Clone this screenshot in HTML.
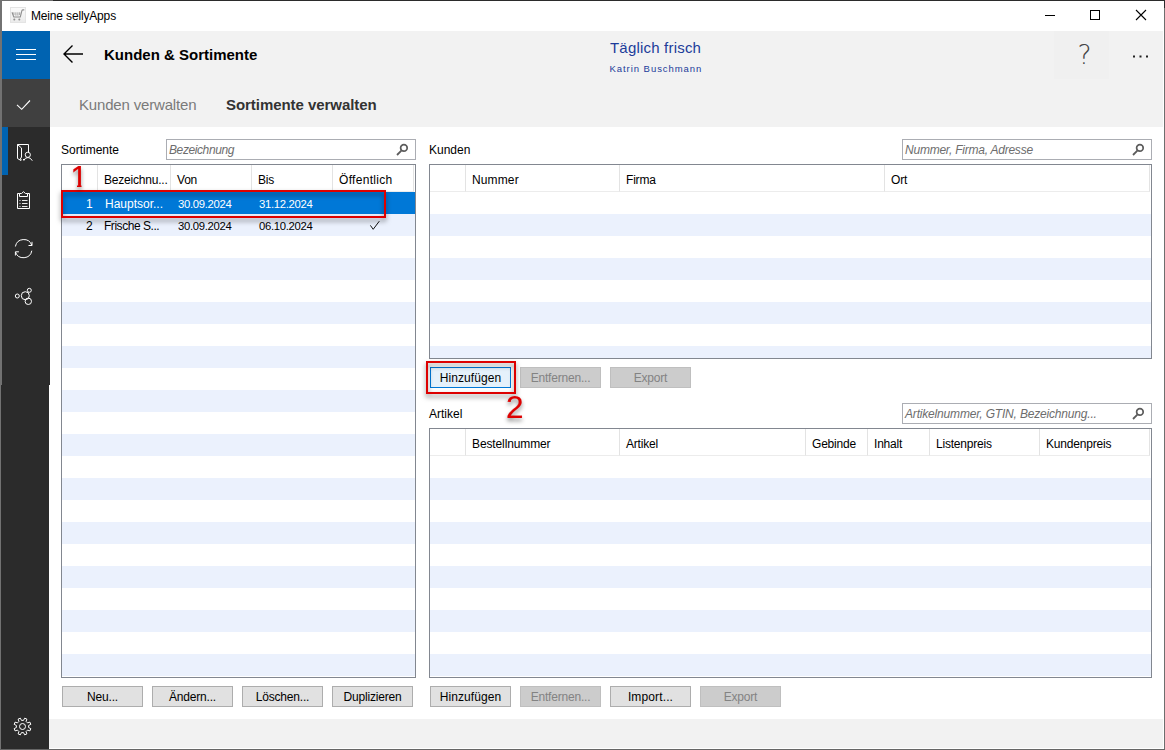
<!DOCTYPE html>
<html lang="de">
<head>
<meta charset="utf-8">
<title>Meine sellyApps</title>
<style>
*{box-sizing:border-box;margin:0;padding:0}
html,body{width:1165px;height:750px;overflow:hidden;background:#fff}
body{font-family:"Liberation Sans",sans-serif;font-size:12px;color:#000;position:relative}
.abs{position:absolute}
#win{position:absolute;left:0;top:0;width:1165px;height:750px;background:#fff;overflow:hidden}
#bt{left:0;top:0;width:1165px;height:1px;background:linear-gradient(90deg,#444 0,#444 2px,#6e6e6e 2px,#6e6e6e 53px,#2b2b2b 53px)}
#bl{left:0;top:0;width:2px;height:385px;background:#727272}
#bl2{left:0;top:385px;width:1px;height:365px;background:#727272}
#br{left:1164px;top:0;width:1px;height:750px;background:linear-gradient(#2b2b2b 0,#2b2b2b 8px,#6e6e6e 8px)}
#bb{left:0;top:749px;width:1165px;height:1px;background:#666}
#titlebar{left:2px;top:1px;width:1162px;height:30px;background:#fff}
#side{left:2px;top:31px;width:48px;height:354px;background:#2b2b2b}
#side2{left:1px;top:385px;width:48px;height:364px;background:#2b2b2b}
#hamb{left:0;top:0;width:48px;height:48px;background:#0063b1}
#chk{left:0;top:48px;width:48px;height:48px;background:#404040}
#sel{left:0;top:96px;width:6px;height:48px;background:#0063b1}
#head{left:50px;top:31px;width:1113px;height:96px;background:#f2f2f2}
#foot{left:49px;top:719px;width:1114px;height:29px;background:#f2f2f2}
.t{position:absolute;white-space:nowrap;line-height:16px;height:16px}
.d{font-size:11.300px;letter-spacing:-.3px}
.lb{position:absolute;border:1px solid #828790;background:#fff;overflow:hidden}
.row{position:absolute;left:0;right:0;height:22px}
.alt{background:#ebf1fd}
.hd{position:absolute;top:0;height:27px;border-right:1px solid #e3e3e3;border-bottom:1px solid #ececec}
.hd span{position:absolute;left:6px;top:7px;letter-spacing:-.2px;line-height:16px;white-space:nowrap}
.sb{position:absolute;height:21px;border:1px solid #abadb3;background:#fff}
.sb span{position:absolute;left:2px;top:2px;letter-spacing:-.3px;line-height:16px;font-style:italic;color:#6d6d6d;white-space:nowrap}
.btn{position:absolute;width:81px;height:21px;border:1px solid #adadad;background:#e1e1e1;text-align:center;line-height:21px;letter-spacing:-.2px;white-space:nowrap}
.btn.dis{background:#cccccc;border-color:#bfbfbf;color:#838383}
.btn.def{background:#e5f1fb;border-color:#0078d7}
.red{position:absolute;border:2px solid #dd0000;filter:drop-shadow(0 3px 2.5px rgba(0,0,0,.5))}
.num{position:absolute;color:#dd0000;font-size:30px;line-height:30px;filter:drop-shadow(0 3px 2px rgba(0,0,0,.45))}
.num span{display:block;-webkit-text-stroke:.4px #dd0000}
</style>
</head>
<body>
<div id="win">
  <div id="titlebar" class="abs"></div>
  <div id="head" class="abs"></div>
  <div id="foot" class="abs"></div>
  <div id="side2" class="abs"></div>
  <div id="side" class="abs">
    <div id="hamb" class="abs"></div>
    <div id="chk" class="abs"></div>
    <div id="sel" class="abs"></div>
  </div>
  <!-- title bar -->
  <svg class="abs" style="left:10px;top:7px" width="16" height="16" viewBox="0 0 16 16">
    <defs><linearGradient id="ig" x1="0" y1="0" x2="0" y2="1"><stop offset="0" stop-color="#fbfbfb"/><stop offset="1" stop-color="#ebebeb"/></linearGradient></defs><rect x="0.500" y="0.500" width="15" height="15" fill="url(#ig)" stroke="#e4e4e4"/>
    <path d="M2 5.300 L3.800 10 H10.300 L11.900 3.600 Q12.100 2.900 13 2.900 H14.300" fill="none" stroke="#8e8e8e" stroke-width="1.100"/>
    <path d="M3.900 5.300 V8 M5.900 5.300 V8.600 M7.900 5.300 V8.600 M9.700 5.300 V8" fill="none" stroke="#a0a0a0" stroke-width="1"/>
    <circle cx="4.300" cy="12.400" r="1" fill="#8e8e8e"/><circle cx="9.300" cy="12.400" r="1" fill="#8e8e8e"/>
  </svg>
  <div class="t" style="left:31px;top:8px;letter-spacing:-.16px">Meine sellyApps</div>
  <svg class="abs" style="left:1030px;top:1px" width="134" height="30" viewBox="0 0 134 30">
    <path d="M15 14.5 H25" stroke="#000" stroke-width="1" fill="none"/>
    <rect x="60.5" y="9.5" width="9" height="9" stroke="#000" stroke-width="1" fill="none"/>
    <path d="M106 9 L116 19 M116 9 L106 19" stroke="#000" stroke-width="1.1" fill="none"/>
  </svg>
  <!-- sidebar icons -->
  <svg class="abs" style="left:2px;top:31px" width="48" height="354" viewBox="0 0 48 354">
    <g stroke="#fff" stroke-width="1" fill="none">
      <path d="M14 18.500 H34 M14 23.500 H34 M14 28.500 H34"/>
      <path d="M15 73.800 L19.700 78.300 L28 69.500" stroke-width="1.100"/>
      <!-- folder/person -->
      <path d="M15.500 113.500 H26.500 V121 M15.500 113.500 V127.500 L19 129.500 V128 M15.500 113.500 L19.500 117 V126 L18 128.500 M21 128.500 H23"/>
      <circle cx="25.800" cy="123.800" r="2.600"/>
      <path d="M21.800 129.700 Q22.800 126.500 26 126.500 Q28.500 126.500 30.300 129.700"/>
      <!-- clipboard -->
      <path d="M15.500 162.500 H17.500 M25.500 162.500 H27.500 V177.500 H15.500 V162.500 M17.500 165.500 V162.500 L19.500 162.500 L21.500 160.700 L23.500 162.500 L25.500 162.500 V165.500 Z"/>
      <path d="M17.500 169.500 H18.500 M20 169.500 H25.500 M17.500 172.500 H18.500 M20 172.500 H25.500 M17.500 175.500 H18.500 M20 175.500 H25.500" stroke-width=".9"/>
      <!-- sync -->
      <path d="M13.400 215.500 A8.500 8.500 0 0 1 29.800 214.300 M30 210.800 V214.500 H26.500"/>
      <path d="M29.800 219.700 A8.500 8.500 0 0 1 13.400 221 M13.400 224.500 V220.800 H16.900"/>
      <!-- share -->
      <circle cx="15.300" cy="265" r="2"/>
      <circle cx="23.300" cy="264.700" r="4"/>
      <circle cx="27.300" cy="259.300" r="2"/>
      <circle cx="26.300" cy="270.300" r="3.200"/>
    </g>
  </svg>
  <svg class="abs" style="left:0;top:700px" width="50" height="48" viewBox="0 700 50 48">
    <g stroke="#fff" stroke-width="1" fill="none">
      <circle cx="22.500" cy="726.500" r="3"/>
      <path d="M23.52 720.39 L24.65 718.17 L26.86 719.09 L26.10 721.45 L27.55 722.90 L29.91 722.14 L30.83 724.35 L28.61 725.48 L28.61 727.52 L30.83 728.65 L29.91 730.86 L27.55 730.10 L26.10 731.55 L26.86 733.91 L24.65 734.83 L23.52 732.61 L21.48 732.61 L20.35 734.83 L18.14 733.91 L18.90 731.55 L17.45 730.10 L15.09 730.86 L14.17 728.65 L16.39 727.52 L16.39 725.48 L14.17 724.35 L15.09 722.14 L17.45 722.90 L18.90 721.45 L18.14 719.09 L20.35 718.17 L21.48 720.39 Z"/>
    </g>
  </svg>
  <!-- header -->
  <svg class="abs" style="left:60px;top:42px" width="28" height="24" viewBox="0 0 28 24">
    <path d="M4 12 H23 M12.500 3.500 L4 12 L12.500 20.500" stroke="#000" stroke-width="1.4" fill="none"/>
  </svg>
  <div class="t" style="left:104px;top:45px;font-size:15px;font-weight:bold;line-height:20px;height:20px">Kunden &amp; Sortimente</div>
  <div class="t" style="left:610px;top:38px;font-size:15px;line-height:20px;height:20px;color:#1c3c9a;letter-spacing:.2px">Täglich frisch</div>
  <div class="t" style="left:609.500px;top:62px;font-size:9.500px;line-height:14px;height:14px;color:#1c3c9a;letter-spacing:.95px">Katrin Buschmann</div>
  <div class="abs" style="left:1054px;top:31px;width:55px;height:48px;background:#f0f0f0"></div>
  <div class="t" style="left:1077.500px;top:40px;font-size:26.500px;line-height:30px;height:30px;color:#444;font-family:'DejaVu Sans Light','DejaVu Sans','Liberation Sans',sans-serif;font-weight:200">?</div>
  <svg class="abs" style="left:1130px;top:50px" width="22" height="12" viewBox="0 0 22 12"><g fill="#222"><rect x="3" y="5.500" width="2" height="2"/><rect x="9.500" y="5.500" width="2" height="2"/><rect x="16" y="5.500" width="2" height="2"/></g></svg>
  <div class="t" style="left:79px;top:95px;font-size:15px;line-height:20px;height:20px;color:#7a7a7a;letter-spacing:-.17px">Kunden verwalten</div>
  <div class="t" style="left:226px;top:95px;font-size:15px;font-weight:bold;line-height:20px;height:20px;color:#333;letter-spacing:-.05px">Sortimente verwalten</div>

  <!-- left: Sortimente -->
  <div class="t" style="left:61px;top:142px">Sortimente</div>
  <div class="sb" style="left:166px;top:139px;width:250px"><span style="letter-spacing:-.4px">Bezeichnung</span>
    <svg class="abs" style="left:229px;top:3px" width="14" height="14" viewBox="0 0 14 14"><circle cx="7.900" cy="4.900" r="3.300" stroke="#5c5c5c" stroke-width="1.700" fill="none"/><path d="M5.600 7.400 L1 12" stroke="#5c5c5c" stroke-width="1.800"/></svg>
  </div>
  <div class="lb" id="lb1" style="left:61px;top:164px;width:355px;height:514px">
    <div class="hd" style="left:0;width:36px"></div>
    <div class="hd" style="left:36px;width:73px"><span>Bezeichnu...</span></div>
    <div class="hd" style="left:109px;width:81px"><span>Von</span></div>
    <div class="hd" style="left:190px;width:81px"><span>Bis</span></div>
    <div class="hd" style="left:271px;width:81px"><span style="letter-spacing:.3px">Öffentlich</span></div>
    <div class="row" style="top:27px;background:#0078d7;color:#fff">
      <span class="t" style="left:24px;top:4px">1</span><span class="t" style="left:43px;top:4px">Hauptsor...</span><span class="t d" style="left:116px;top:4px">30.09.2024</span><span class="t d" style="left:197px;top:4px">31.12.2024</span>
    </div>
    <div class="row alt" style="top:49px">
      <span class="t" style="left:24px;top:4px">2</span><span class="t" style="left:42px;top:4px;letter-spacing:-.46px">Frische S...</span><span class="t d" style="left:116px;top:4px">30.09.2024</span><span class="t d" style="left:197px;top:4px">06.10.2024</span><svg class="abs" style="left:306px;top:5px" width="14" height="12" viewBox="368 219 14 12"><path d="M370.400 225.400 L373.200 229.300 L379.300 221.200" stroke="#111" stroke-width="1" fill="none"/></svg>
    </div>
    <div class="row alt" style="top:93px"></div>
    <div class="row alt" style="top:137px"></div>
    <div class="row alt" style="top:181px"></div>
    <div class="row alt" style="top:225px"></div>
    <div class="row alt" style="top:269px"></div>
    <div class="row alt" style="top:313px"></div>
    <div class="row alt" style="top:357px"></div>
    <div class="row alt" style="top:401px"></div>
    <div class="row alt" style="top:445px"></div>
    <div class="row alt" style="top:489px"></div>
  </div>
  <div class="btn" style="left:62px;top:686px">Neu...</div>
  <div class="btn" style="left:152px;top:686px">Ändern...</div>
  <div class="btn" style="left:242px;top:686px">Löschen...</div>
  <div class="btn" style="left:332px;top:686px">Duplizieren</div>

  <!-- right: Kunden -->
  <div class="t" style="left:429px;top:142px">Kunden</div>
  <div class="sb" style="left:902px;top:139px;width:250px"><span style="letter-spacing:-.23px">Nummer, Firma, Adresse</span>
    <svg class="abs" style="left:229px;top:3px" width="14" height="14" viewBox="0 0 14 14"><circle cx="7.900" cy="4.900" r="3.300" stroke="#5c5c5c" stroke-width="1.700" fill="none"/><path d="M5.600 7.400 L1 12" stroke="#5c5c5c" stroke-width="1.800"/></svg>
  </div>
  <div class="lb" id="lb2" style="left:429px;top:164px;width:723px;height:195px">
    <div class="hd" style="left:0;width:36px"></div>
    <div class="hd" style="left:36px;width:154px"><span style="letter-spacing:.13px">Nummer</span></div>
    <div class="hd" style="left:190px;width:265px"><span>Firma</span></div>
    <div class="hd" style="left:455px;width:265px"><span>Ort</span></div>
    <div class="row alt" style="top:49px"></div>
    <div class="row alt" style="top:93px"></div>
    <div class="row alt" style="top:137px"></div>
    <div class="row alt" style="top:181px"></div>
  </div>
  <div class="btn def" style="left:430px;top:367px;letter-spacing:.08px">Hinzufügen</div>
  <div class="btn dis" style="left:520px;top:367px">Entfernen...</div>
  <div class="btn dis" style="left:610px;top:367px">Export</div>

  <!-- right: Artikel -->
  <div class="t" style="left:429px;top:406px">Artikel</div>
  <div class="sb" style="left:902px;top:403px;width:250px"><span style="letter-spacing:-.18px">Artikelnummer, GTIN, Bezeichnung...</span>
    <svg class="abs" style="left:229px;top:3px" width="14" height="14" viewBox="0 0 14 14"><circle cx="7.900" cy="4.900" r="3.300" stroke="#5c5c5c" stroke-width="1.700" fill="none"/><path d="M5.600 7.400 L1 12" stroke="#5c5c5c" stroke-width="1.800"/></svg>
  </div>
  <div class="lb" id="lb3" style="left:429px;top:428px;width:723px;height:250px">
    <div class="hd" style="left:0;width:36px"></div>
    <div class="hd" style="left:36px;width:154px"><span style="letter-spacing:-.12px">Bestellnummer</span></div>
    <div class="hd" style="left:190px;width:186px"><span>Artikel</span></div>
    <div class="hd" style="left:376px;width:62px"><span>Gebinde</span></div>
    <div class="hd" style="left:438px;width:62px"><span>Inhalt</span></div>
    <div class="hd" style="left:500px;width:110px"><span>Listenpreis</span></div>
    <div class="hd" style="left:610px;width:110px"><span>Kundenpreis</span></div>
    <div class="row alt" style="top:49px"></div>
    <div class="row alt" style="top:93px"></div>
    <div class="row alt" style="top:137px"></div>
    <div class="row alt" style="top:181px"></div>
    <div class="row alt" style="top:225px"></div>
  </div>
  <div class="btn" style="left:430px;top:686px;letter-spacing:.08px">Hinzufügen</div>
  <div class="btn dis" style="left:520px;top:686px">Entfernen...</div>
  <div class="btn" style="left:610px;top:686px;letter-spacing:.13px">Import...</div>
  <div class="btn dis" style="left:700px;top:686px">Export</div>

  <!-- annotations -->
  <div class="red" style="left:61px;top:190px;width:325px;height:28px"></div>
  <div class="num" style="left:70.500px;top:161.500px;font-size:30.500px"><span id="n1" style="-webkit-text-stroke:.25px #dd0000;clip-path:polygon(0 0,11px 0,11px 25.500px,6.500px 25.500px,6.500px 15px,0 15px)">1</span></div>
  <div class="red" style="left:426px;top:361px;width:90px;height:33px"></div>
  <div class="num" style="left:506px;top:392px;font-size:31.500px"><span style="-webkit-text-stroke:.2px #dd0000">2</span></div>

  <div id="bt" class="abs"></div><div id="bl" class="abs"></div><div id="bl2" class="abs"></div><div id="br" class="abs"></div><div id="bb" class="abs"></div>
</div>
</body>
</html>
